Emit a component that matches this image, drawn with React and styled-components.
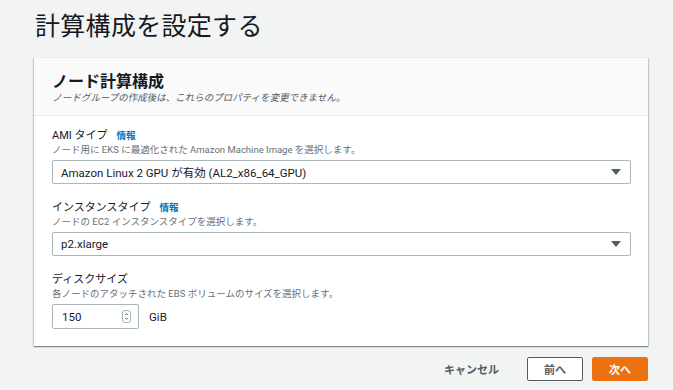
import React from "react";
import styled, { createGlobalStyle } from "styled-components";

const GlobalStyle = createGlobalStyle`
  html, body {
    margin: 0;
    padding: 0;
    background: #f2f3f3;
  }
  body {
    font-family: Roboto, "Noto Sans CJK JP", sans-serif;
    color: #16191f;
  }
`;

const Page = styled.div`
  width: 673px;
  height: 390px;
  box-sizing: border-box;
  padding: 11px 25px 0 34px;
  overflow: hidden;
`;

const Title = styled.h1`
  margin: 0 0 14px 1px;
  font-size: 25px;
  font-weight: 400;
  line-height: 32px;
  letter-spacing: 0.3px;
  color: #16191f;
`;

const Card = styled.div`
  width: 614px;
  background: #fff;
  box-shadow: 0 1px 1px 0 rgba(0, 28, 36, 0.3), 1px 1px 1px 0 rgba(0, 28, 36, 0.15),
    -1px 1px 1px 0 rgba(0, 28, 36, 0.15);
  border-top: 1px solid #eaeded;
`;

const CardHeader = styled.div`
  background: #fafafa;
  border-bottom: 1px solid #eaeded;
  padding: 14px 18px 12px;
`;

const CardTitle = styled.h2`
  margin: 0;
  font-size: 16px;
  font-weight: 700;
  line-height: 20px;
`;

const CardSubtitle = styled.p`
  margin: 0;
  font-size: 9.5px;
  line-height: 11px;
  color: #545b64;
  transform: skewX(-12deg);
  transform-origin: left bottom;
`;

const CardBody = styled.div`
  display: flex;
  flex-direction: column;
  gap: 16px;
  padding: 12px 17px 17px 18px;
`;

const Field = styled.div`
  display: flex;
  flex-direction: column;
`;

const LabelRow = styled.div`
  display: flex;
  align-items: baseline;
  gap: 9px;
  line-height: 15px;
`;

const Label = styled.span`
  font-size: 11px;
  color: #16191f;
`;

const InfoLink = styled.a`
  font-size: 9.5px;
  font-weight: 700;
  color: #0073bb;
  text-decoration: none;
`;

const Description = styled.p`
  margin: 0 0 4px;
  font-size: 9.5px;
  line-height: 13px;
  color: #687078;
`;

const Select = styled.div`
  display: flex;
  align-items: center;
  justify-content: space-between;
  height: 24px;
  box-sizing: border-box;
  border: 1px solid #aab7b8;
  border-radius: 2px;
  padding: 0 8px;
  font-size: 11.5px;
  color: #16191f;
`;

const Caret = styled.span`
  width: 0;
  height: 0;
  border-left: 5px solid transparent;
  border-right: 5px solid transparent;
  border-top: 6px solid #545b64;
  margin-right: 1px;
`;

const InputRow = styled.div`
  display: flex;
  align-items: center;
  gap: 10px;
`;

const NumberBox = styled.div`
  display: flex;
  align-items: center;
  justify-content: space-between;
  width: 87px;
  height: 25px;
  box-sizing: border-box;
  border: 1px solid #aab7b8;
  border-radius: 2px;
  padding: 0 7px 0 9px;
  font-size: 11.5px;
`;

const Spinner = styled.span`
  display: flex;
  align-items: center;
  justify-content: center;
  width: 7px;
  height: 11px;
  border: 1px solid #aab7b8;
  border-radius: 3px;
`;

const Unit = styled.span`
  font-size: 11.5px;
`;

const Actions = styled.div`
  display: flex;
  justify-content: flex-end;
  align-items: center;
  gap: 9px;
  width: 614px;
  margin-top: 11px;
`;

const Button = styled.button`
  height: 24px;
  box-sizing: border-box;
  padding: 0 ${(p) => (p.$variant === "link" ? "12px" : "14px")};
  min-width: ${(p) => (p.$variant === "link" ? "auto" : "56px")};
  margin-right: ${(p) => (p.$variant === "link" ? "6px" : "0")};
  font-family: inherit;
  font-size: 11px;
  font-weight: 700;
  border-radius: 2px;
  cursor: pointer;
  color: ${(p) => (p.$variant === "primary" ? "#fff" : "#545b64")};
  background: ${(p) => (p.$variant === "primary" ? "#ec7211" : p.$variant === "link" ? "transparent" : "#fff")};
  border: 1px solid
    ${(p) => (p.$variant === "primary" ? "#ec7211" : p.$variant === "link" ? "transparent" : "#545b64")};
`;

const SpinIcon = () => (
  <svg width="5" height="9" viewBox="0 0 5 9">
    <path d="M1 3.2 L2.5 1.6 L4 3.2 M1 5.8 L2.5 7.4 L4 5.8" fill="none" stroke="#545b64" strokeWidth="0.9" />
  </svg>
);

const SelectField = ({ label, description, value }) => (
  <Field>
    <LabelRow>
      <Label>{label}</Label>
      <InfoLink href="#">情報</InfoLink>
    </LabelRow>
    <Description>{description}</Description>
    <Select>
      <span>{value}</span>
      <Caret />
    </Select>
  </Field>
);

export default function App() {
  return (
    <Page>
      <GlobalStyle />
      <Title>計算構成を設定する</Title>
      <Card>
        <CardHeader>
          <CardTitle>ノード計算構成</CardTitle>
          <CardSubtitle>ノードグループの作成後は、これらのプロパティを変更できません。</CardSubtitle>
        </CardHeader>
        <CardBody>
          <SelectField
            label="AMI タイプ"
            description="ノード用に EKS に最適化された Amazon Machine Image を選択します。"
            value="Amazon Linux 2 GPU が有効 (AL2_x86_64_GPU)"
          />
          <SelectField
            label="インスタンスタイプ"
            description="ノードの EC2 インスタンスタイプを選択します。"
            value="p2.xlarge"
          />
          <Field>
            <LabelRow>
              <Label>ディスクサイズ</Label>
            </LabelRow>
            <Description>各ノードのアタッチされた EBS ボリュームのサイズを選択します。</Description>
            <InputRow>
              <NumberBox>
                <span>150</span>
                <Spinner>
                  <SpinIcon />
                </Spinner>
              </NumberBox>
              <Unit>GiB</Unit>
            </InputRow>
          </Field>
        </CardBody>
      </Card>
      <Actions>
        <Button $variant="link">キャンセル</Button>
        <Button>前へ</Button>
        <Button $variant="primary">次へ</Button>
      </Actions>
    </Page>
  );
}
